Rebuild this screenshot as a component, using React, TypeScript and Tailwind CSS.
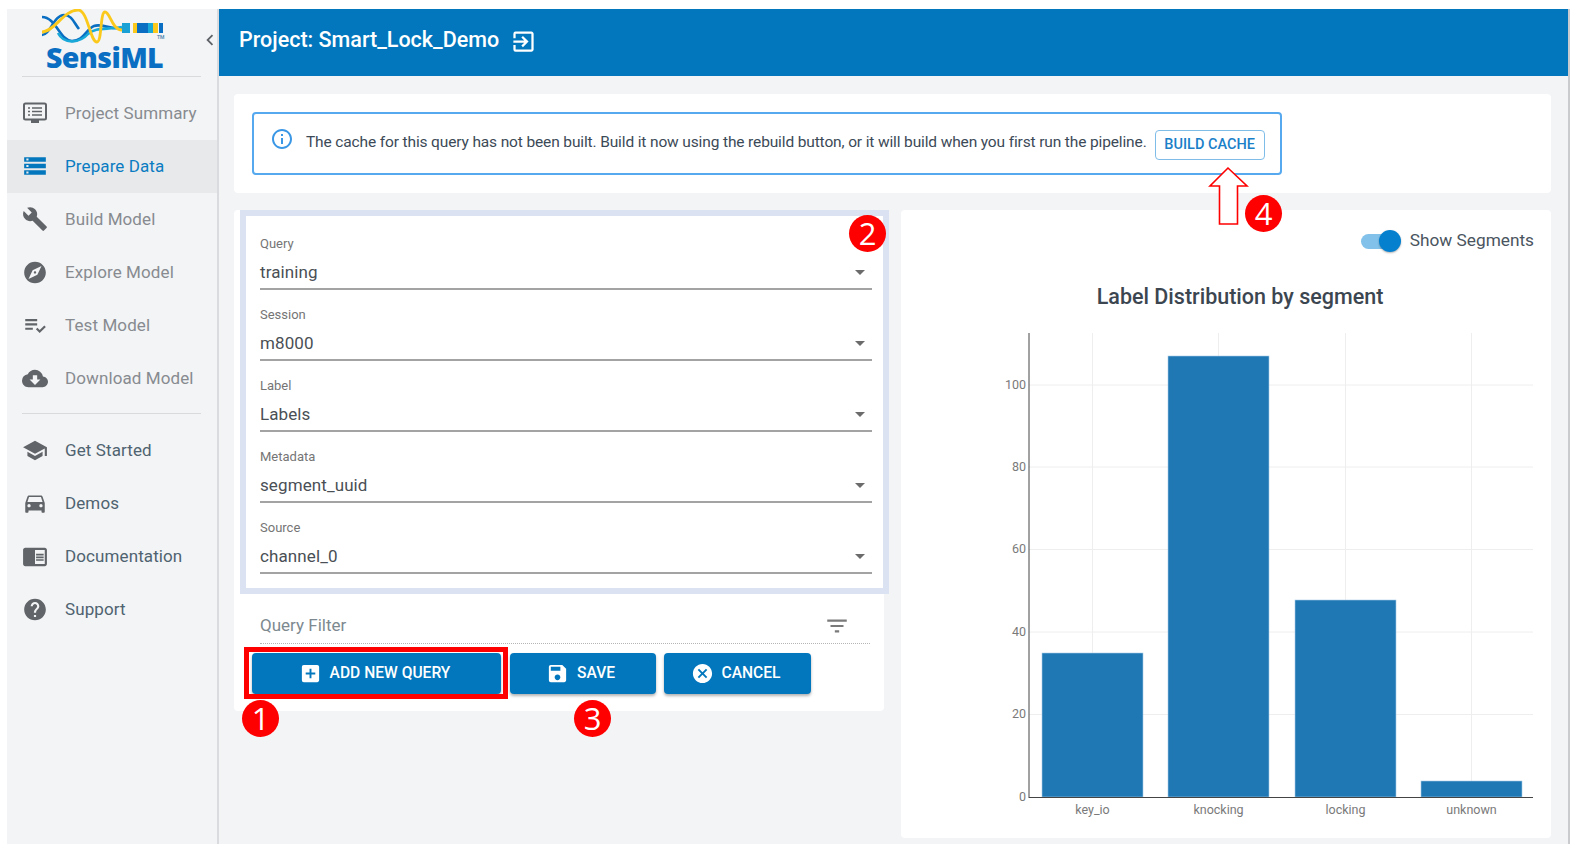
import React from "react";
import {
  MdStorage, MdBuild, MdExplore, MdPlaylistAddCheck, MdCloudDownload, MdSchool, MdDirectionsCar,
  MdChromeReaderMode, MdHelp, MdExitToApp, MdInfoOutline, MdArrowDropDown, MdFilterList, MdAddBox, MdSave, MdCancel, MdChevronLeft,
} from "react-icons/md";

function SummaryIcon() {
  return (
    <svg width="26" height="24" viewBox="0 0 26 24" fill="none">
      <rect x="2" y="2.5" width="22" height="16" rx="1.5" stroke="currentColor" strokeWidth="2" />
      <rect x="9" y="19" width="8" height="3" fill="currentColor" />
      <path d="M6 7h2M10 7h10M6 10.5h2M10 10.5h10M6 14h2M10 14h10" stroke="currentColor" strokeWidth="1.5" />
    </svg>
  );
}

function Logo() {
  return (
    <div className="flex flex-col items-start h-[67px] overflow-hidden">
      <svg width="126" height="36" viewBox="0 0 126 36" fill="none" className="shrink-0 ml-[20px]">
        <path d="M0 8C14 8 18 32 30 32C42 32 44 20 52 17C60 14 68 21 80 19" stroke="#0a6fc2" strokeWidth="2.6" />
        <path d="M0 26C8 26 12 6 22 6C30 6 32 14 37 20" stroke="#0a6fc2" strokeWidth="2.6" />
        <path d="M16 24C22 36 38 34 46 25C54 18 64 21 80 18" stroke="#19a9d9" strokeWidth="2.6" />
        <path d="M0 23C12 23 22 1 36 1C46 1 48 33 55 33C60 33 58 3 63 3C68 3 70 21 80 21" stroke="#fbc91b" strokeWidth="2.8" />
        <rect x="80" y="14" width="8" height="10" fill="#19a0d4" />
        <rect x="91" y="14" width="4" height="10" fill="#fbc91b" />
        <rect x="95" y="14" width="11" height="10" fill="#0a6fc2" />
        <rect x="106" y="14" width="5" height="10" fill="#19a9d9" />
        <rect x="111" y="14" width="5" height="10" fill="#fbc91b" />
        <rect x="117" y="14" width="4" height="10" fill="#0a6fc2" />
        <text x="115" y="29.5" fontSize="5" fontWeight="700" fill="#5a8fb5" fontFamily="Roboto, sans-serif">TM</text>
      </svg>
      <div className="ml-[24px] font-['Open_Sans',sans-serif] font-extrabold text-[28.5px] leading-[24px] tracking-[-0.6px] text-[#0a6fc2]">SensiML</div>
    </div>
  );
}

function NavItem({ icon, label, active, dark }: { icon: React.ReactNode; label: string; active?: boolean; dark?: boolean }) {
  return (
    <div className={`flex items-center h-[53px] pl-[15px] ${active ? "bg-[#e8e9eb] text-[#0a7cc2]" : dark ? "text-[#4f6370]" : "text-[#878b90]"}`}>
      <div className={`w-[26px] h-[26px] flex items-center justify-center ${active ? "text-[#0277bd]" : "text-[#616468]"}`}>{icon}</div>
      <span className="ml-[17px] text-[17px] leading-[24px] tracking-[0.1px]">{label}</span>
    </div>
  );
}

function Field({ label, value }: { label: string; value: string }) {
  return (
    <div className="mb-[17px] border-b-[2px] border-[#a3a3a3] relative">
      <div className="h-[16px] text-[13px] leading-[16px] text-[#757575]">{label}</div>
      <div className="pt-[8px] h-[36px] text-[17px] leading-[24px] text-[#4a4f55] tracking-[0.1px]">{value}</div>
      <MdArrowDropDown size={24} className="absolute right-[0px] top-[24px] text-[#6b6b6b]" />
    </div>
  );
}

function Btn({ icon, label, w }: { icon: React.ReactNode; label: string; w: string }) {
  return (
    <div className={`${w} h-[41px] bg-[#0277bd] rounded-[4px] shadow-[0_2px_3px_rgba(0,0,0,0.3)] flex items-center justify-center gap-[8px] text-white text-[15.6px] font-medium pr-[4px]`}>
      {icon}
      <span className="pt-[1px]">{label}</span>
    </div>
  );
}

function Badge({ n, className }: { n: string; className: string }) {
  return (
    <div className={`absolute w-[37px] h-[37px] rounded-full bg-[#fe0000] text-white flex items-center justify-center text-[31px] leading-none font-['Open_Sans',sans-serif] ${className}`}>{n}</div>
  );
}

function Chart() {
  const ys: [string, number][] = [["0", 797], ["20", 714.5], ["40", 632], ["60", 549.5], ["80", 467], ["100", 385]];
  const bars: [string, number, number, number][] = [
    ["key_io", 1042, 101, 653],
    ["knocking", 1168, 101, 356],
    ["locking", 1295, 101, 600],
    ["unknown", 1421, 101, 781],
  ];
  return (
    <svg width="650" height="506" viewBox="901 325 650 506" className="block mt-[14px]">
      {ys.slice(1).map(([t, y]) => <line key={t} x1="1029" x2="1533" y1={y} y2={y} stroke="#eeeeee" />)}
      {bars.map(([n, x, w]) => <line key={n} x1={x + w / 2} x2={x + w / 2} y1="333" y2="797" stroke="#eeeeee" />)}
      {bars.map(([n, x, w, top]) => (
        <rect key={n} x={x} y={top} width={w} height={797 - top} fill="#1f77b4" stroke="#a5cbe6" strokeWidth="0.6" />
      ))}
      <line x1="1029" x2="1029" y1="333" y2="798" stroke="#444" />
      <line x1="1029" x2="1533" y1="797.5" y2="797.5" stroke="#444" />
      {ys.map(([t, y]) => (
        <text key={t} x="1026" y={y + 3.5} textAnchor="end" fontSize="12.5" fill="#7a7a7a" fontFamily="Roboto, sans-serif">{t}</text>
      ))}
      {bars.map(([n, x, w]) => (
        <text key={n} x={x + w / 2} y="814" textAnchor="middle" fontSize="12.5" fill="#7a7a7a" fontFamily="Roboto, sans-serif">{n}</text>
      ))}
    </svg>
  );
}

export default function App() {
  return (
    <div className="relative w-[1581px] h-[854px] bg-white pl-[7px] pt-[9px] pr-[11px] pb-[10px] font-['Roboto',sans-serif] overflow-hidden">
      <div className="flex h-full border-r-[2px] border-[#c9cbce]">
        <aside className="relative w-[212px] shrink-0 bg-[#f3f4f6] border-r-[2px] border-[#d9dbde]">
          <MdChevronLeft size={22} className="absolute right-[-4px] top-[20px] text-[#5f6368]" />
          <div className="mx-[15px] w-[179px] border-b border-[#d9dadc]">
            <Logo />
          </div>
          <nav className="pt-[9.5px]">
            <NavItem icon={<SummaryIcon />} label="Project Summary" />
            <NavItem icon={<MdStorage size={28} />} label="Prepare Data" active />
            <NavItem icon={<MdBuild size={26} />} label="Build Model" />
            <NavItem icon={<MdExplore size={27} />} label="Explore Model" />
            <NavItem icon={<MdPlaylistAddCheck size={27} />} label="Test Model" />
            <NavItem icon={<MdCloudDownload size={29} />} label="Download Model" />
            <div className="mx-[15px] w-[179px] mt-[8px] mb-[10px] border-b border-[#d9dadc]" />
            <NavItem icon={<MdSchool size={27} />} label="Get Started" dark />
            <NavItem icon={<MdDirectionsCar size={26} />} label="Demos" dark />
            <NavItem icon={<MdChromeReaderMode size={27} />} label="Documentation" dark />
            <NavItem icon={<MdHelp size={27} />} label="Support" dark />
          </nav>
        </aside>

        <main className="flex-1 min-w-0 flex flex-col bg-[#f3f4f6]">
          <header className="h-[67px] shrink-0 bg-[#0277bd] flex items-center pl-[20px] pb-[6px] text-white">
            <span className="text-[21.5px] font-medium leading-[28px]">Project: Smart_Lock_Demo</span>
            <MdExitToApp size={27} className="ml-[11px] mt-[3px]" />
          </header>

          <div className="flex-1 pt-[18px] pl-[15px] pr-[17px]">
            <section className="h-[99px] bg-white rounded-[4px] pt-[18px] pl-[18px]">
              <div className="w-[1030px] h-[63px] border-[2px] border-[#56a9ee] rounded-[4px] flex items-center pl-[16px]">
                <MdInfoOutline size={24} className="text-[#3a97e6] mt-[-9px]" />
                <span className="ml-[12px] mt-[-4px] text-[15.5px] leading-[24px] text-[#3c4a57] whitespace-nowrap tracking-[-0.135px]">
                  The cache for this query has not been built. Build it now using the rebuild button, or it will build when you first run the pipeline.
                </span>
                <div className="ml-[8px] mt-[2px] w-[110px] h-[30px] border-[1.5px] border-[#7fbde8] rounded-[4px] flex items-center justify-center text-[14.5px] font-medium text-[#1a80c8]">
                  BUILD CACHE
                </div>
              </div>
            </section>

            <div className="flex gap-[17px] mt-[17px]">
              <section className="w-[650px] h-[501px] bg-white rounded-[4px] shrink-0">
                <div className="ml-[6px] w-[649px] h-[384px] border-[6px] border-[#dbe3f2] bg-white pl-[14px] pr-[11px] pt-[20px] relative">
                  <Field label="Query" value="training" />
                  <Field label="Session" value="m8000" />
                  <Field label="Label" value="Labels" />
                  <Field label="Metadata" value="segment_uuid" />
                  <Field label="Source" value="channel_0" />
                </div>
                <div className="ml-[26px] mr-[14px] h-[50px] border-b border-dotted border-[#b5b5b5] flex items-center justify-between pt-[15px]">
                  <span className="text-[17px] text-[#7d8990]">Query Filter</span>
                  <MdFilterList size={26} className="text-[#7a7a7a] mr-[20px]" />
                </div>
                <div className="flex gap-[8.5px] ml-[18px] mt-[9px]">
                  <Btn w="w-[249px]" icon={<MdAddBox size={23} />} label="ADD NEW QUERY" />
                  <Btn w="w-[146px]" icon={<MdSave size={23} />} label="SAVE" />
                  <Btn w="w-[147px]" icon={<MdCancel size={23} />} label="CANCEL" />
                </div>
              </section>

              <section className="flex-1 h-[628px] bg-white rounded-[4px]">
                <div className="flex items-center justify-end pr-[17px] pt-[18px] h-[44px]">
                  <div className="relative w-[40px] h-[22px] flex items-center">
                    <div className="w-[34px] h-[15px] rounded-full bg-[#81c1ea]" />
                    <div className="absolute right-0 top-0 w-[22px] h-[22px] rounded-full bg-[#0480cf] shadow-[0_1px_2px_rgba(0,0,0,0.3)]" />
                  </div>
                  <span className="ml-[9px] text-[17.25px] text-[#4a5560]">Show Segments</span>
                </div>
                <h2 className="text-center text-[21.5px] font-medium text-[#3c4650] mt-[29px] leading-[28px] pl-[28px]">Label Distribution by segment</h2>
                <Chart />
              </section>
            </div>
          </div>
        </main>
      </div>

      <div className="absolute left-[244px] top-[647px] w-[264px] h-[52px] border-[5px] border-[#fe0000]" />
      <Badge n="1" className="left-[242px] top-[700px]" />
      <Badge n="3" className="left-[574px] top-[700px]" />
      <Badge n="2" className="left-[849px] top-[215px]" />
      <Badge n="4" className="left-[1245px] top-[195px]" />
      <svg className="absolute left-[1205px] top-[162px]" width="48" height="66" viewBox="1205 162 48 66" fill="white" stroke="#fe0000" strokeWidth="1.6">
        <path d="M1228 168L1210 186H1219.5V224H1237.5V186H1247Z" />
      </svg>
    </div>
  );
}
